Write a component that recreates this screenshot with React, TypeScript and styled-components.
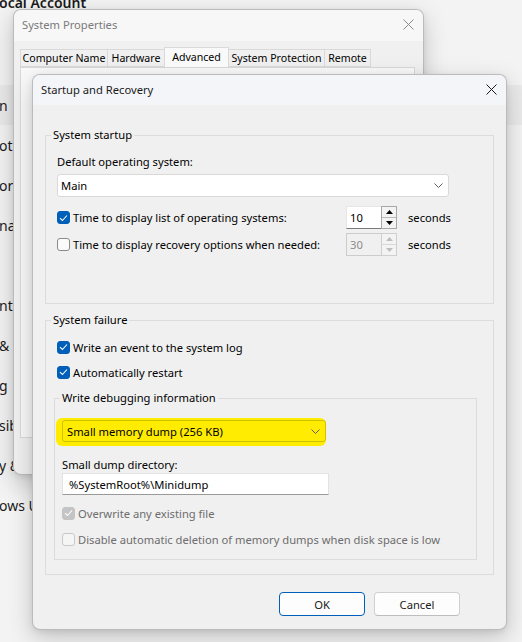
import React from 'react';
import styled, { createGlobalStyle } from 'styled-components';

const GlobalStyle = createGlobalStyle`
  html, body {
    margin: 0;
    padding: 0;
    background: #f3f3f3;
  }
  body {
    font-family: "Noto Sans", "Liberation Sans", sans-serif;
  }
  * {
    box-sizing: border-box;
  }
`;

const FONT = '11.2px';

const Desktop = styled.div`
  position: relative;
  width: 522px;
  height: 642px;
  overflow: hidden;
  background: #f3f3f3;
  color: #1a1a1a;
`;

// settings app behind the dialogs, only its left edge shows
const Nav = styled.div`
  display: flex;
  flex-direction: column;
  margin-left: -1px;
`;

const NavHeader = styled.div`
  font-size: 14px;
  font-weight: 600;
  line-height: 20px;
  margin-top: -7px;
  margin-bottom: 72px;
  white-space: nowrap;
`;

const NavItem = styled.div<{ $active?: boolean }>`
  height: 40px;
  display: flex;
  align-items: center;
  font-size: 14px;
  white-space: nowrap;
  background: ${p => (p.$active ? '#eaeaea' : 'transparent')};
`;

const Window = styled.div<{ $left: number; $top: number; $width: number; $height: number }>`
  position: absolute;
  left: ${p => p.$left}px;
  top: ${p => p.$top}px;
  width: ${p => p.$width}px;
  height: ${p => p.$height}px;
  display: flex;
  flex-direction: column;
  background: #f0f0f0;
  border: 1px solid rgba(0, 0, 0, 0.22);
  border-radius: 8px;
  overflow: hidden;
  box-shadow: 0 8px 24px rgba(0, 0, 0, 0.2), 0 2px 6px rgba(0, 0, 0, 0.08);
  font-size: ${FONT};
`;

const TitleBar = styled.div<{ $height: number; $active?: boolean }>`
  height: ${p => p.$height}px;
  flex: none;
  display: flex;
  align-items: center;
  justify-content: space-between;
  padding: 0 9px 2px 8px;
  background: ${p => (p.$active ? '#f4f5f9' : '#f7f7f7')};
  color: ${p => (p.$active ? '#1a1a1a' : '#7a7a7a')};
  font-size: ${FONT};
`;

const CloseIcon = ({ color }: { color: string }) => (
  <svg width="11" height="11" viewBox="0 0 11 11">
    <path d="M0.5 0.5 L10.5 10.5 M10.5 0.5 L0.5 10.5" stroke={color} strokeWidth="1" />
  </svg>
);

/* System Properties */

const PropsBody = styled.div`
  padding: 6px 8px 0 6px;
  display: flex;
  flex-direction: column;
`;

const TabStrip = styled.div`
  display: flex;
  align-items: flex-end;
  height: 20px;
  padding-left: 1px;
`;

const Tab = styled.div<{ $selected?: boolean; $width: number }>`
  width: ${p => p.$width}px;
  height: ${p => (p.$selected ? 20 : 18)}px;
  padding-bottom: ${p => (p.$selected ? 2 : 0)}px;
  display: flex;
  align-items: center;
  justify-content: center;
  white-space: nowrap;
  font-size: 10.6px;
  color: #000;
  border: 1px solid #d9d9d9;
  border-bottom: ${p => (p.$selected ? 'none' : '1px solid #d9d9d9')};
  margin-left: -1px;
  background: ${p => (p.$selected ? '#f9f9f9' : '#f0f0f0')};
  position: relative;
  z-index: ${p => (p.$selected ? 1 : 0)};
`;

const TabPanel = styled.div`
  height: 371px;
  border: 1px solid #d9d9d9;
  background: #f9f9f9;
`;

/* Startup and Recovery */

const DialogBody = styled.div`
  flex: 1;
  display: flex;
  flex-direction: column;
  padding: 22px 12px 0 12px;
`;

const Group = styled.fieldset<{ $gapTop?: number; $inset?: boolean }>`
  margin: ${p => p.$gapTop ?? 0}px ${p => (p.$inset ? 5 : 0)}px 0 ${p => (p.$inset ? -3 : 0)}px;
  padding: ${p => (p.$inset ? '14px 7px 12px 7px' : '11px 11px 0 11px')};
  border: 1px solid #dcdcdc;
  min-width: 0;
`;

const Legend = styled.legend<{ $shift: number }>`
  padding: 0 2px;
  margin-left: ${p => p.$shift}px;
  font-size: ${FONT};
  line-height: 16px;
  color: #000;
`;

const Label = styled.div<{ $gapTop?: number }>`
  font-size: ${FONT};
  line-height: 16px;
  color: #000;
  margin-top: ${p => p.$gapTop ?? 0}px;
`;

const Select = styled.div<{ $width: number; $height: number; $marked?: boolean }>`
  width: ${p => p.$width}px;
  height: ${p => p.$height}px;
  display: flex;
  align-items: center;
  justify-content: space-between;
  padding: 0 5px 0 ${p => (p.$marked ? 4 : 3)}px;
  background: ${p => (p.$marked ? '#ffec00' : '#ffffff')};
  border: 1px solid ${p => (p.$marked ? '#cfc200' : '#d9d9d9')};
  border-radius: 3px;
  font-size: ${FONT};
  color: #000;
  box-shadow: ${p => (p.$marked ? '-3px 1px 0 3px #ffec00' : 'none')};
`;

const Chevron = () => (
  <svg width="9" height="5" viewBox="0 0 9 5">
    <path d="M0.5 0.5 L4.5 4.5 L8.5 0.5" fill="none" stroke="#606060" strokeWidth="1" />
  </svg>
);

const TextBox = styled.div<{ $width: number }>`
  width: ${p => p.$width}px;
  height: 22px;
  display: flex;
  align-items: center;
  padding-left: 6px;
  background: #fff;
  border: 1px solid #e3e3e3;
  border-bottom-color: #9a9a9a;
  font-size: ${FONT};
  color: #000;
`;

const OptionRow = styled.div<{ $gapTop?: number }>`
  display: flex;
  align-items: center;
  height: 23px;
  margin-top: ${p => p.$gapTop ?? 0}px;
`;

const CheckLine = styled.div<{ $gapTop?: number; $disabled?: boolean }>`
  display: flex;
  align-items: center;
  gap: 3px;
  height: 16px;
  margin-top: ${p => p.$gapTop ?? 0}px;
  font-size: ${FONT};
  white-space: nowrap;
  color: ${p => (p.$disabled ? '#6d6d6d' : '#000')};
`;

const RowLabel = styled(CheckLine)`
  width: 289px;
  flex: none;
`;

const Box = styled.span<{ $checked?: boolean; $disabled?: boolean }>`
  width: 13px;
  height: 13px;
  flex: none;
  display: inline-flex;
  align-items: center;
  justify-content: center;
  border-radius: 3px;
  background: ${p => (p.$checked ? (p.$disabled ? '#c4c4c4' : '#005fb8') : p.$disabled ? '#f5f5f5' : '#fbfbfb')};
  border: 1px solid
    ${p => (p.$checked ? (p.$disabled ? '#c4c4c4' : '#005fb8') : p.$disabled ? '#c8c8c8' : '#8a8a8a')};
`;

const CheckBox = ({ checked, disabled }: { checked?: boolean; disabled?: boolean }) => (
  <Box $checked={checked} $disabled={disabled}>
    {checked && (
      <svg width="9" height="8" viewBox="0 0 9 8">
        <path d="M1 4.2 L3.4 6.5 L8 1.5" fill="none" stroke="#fff" strokeWidth="1.1" />
      </svg>
    )}
  </Box>
);

const SpinInput = styled.div<{ $disabled?: boolean }>`
  width: 35px;
  height: 23px;
  display: flex;
  align-items: center;
  padding-left: 3px;
  font-size: ${FONT};
  background: ${p => (p.$disabled ? '#f0f0f0' : '#fff')};
  color: ${p => (p.$disabled ? '#8c8c8c' : '#000')};
  border: 1px solid ${p => (p.$disabled ? '#cccccc' : '#e6e6e6')};
  border-right: none;
  border-bottom-color: ${p => (p.$disabled ? '#cccccc' : '#7a7a7a')};
`;

const SpinButtons = styled.div<{ $disabled?: boolean }>`
  width: 16px;
  height: 23px;
  display: flex;
  flex-direction: column;
  border: 1px solid ${p => (p.$disabled ? '#cfcfcf' : '#a8a8a8')};
`;

const SpinHalf = styled.div<{ $disabled?: boolean; $down?: boolean }>`
  flex: 1;
  display: flex;
  align-items: center;
  justify-content: center;
  background: #f3f3f3;
  border-top: ${p => (p.$down ? `1px solid ${p.$disabled ? '#d8d8d8' : '#b8b8b8'}` : 'none')};
  color: ${p => (p.$disabled ? '#bdbdbd' : '#000')};
`;

const Arrow = ({ down }: { down?: boolean }) => (
  <svg width="7" height="4" viewBox="0 0 7 4">
    <path d={down ? 'M0 0 L7 0 L3.5 4 Z' : 'M0 4 L7 4 L3.5 0 Z'} fill="currentColor" />
  </svg>
);

const Spin = ({ value, disabled }: { value: string; disabled?: boolean }) => (
  <>
    <SpinInput $disabled={disabled}>{value}</SpinInput>
    <SpinButtons $disabled={disabled}>
      <SpinHalf $disabled={disabled}>
        <Arrow />
      </SpinHalf>
      <SpinHalf $disabled={disabled} $down>
        <Arrow down />
      </SpinHalf>
    </SpinButtons>
  </>
);

const Unit = styled.span`
  margin-left: 11px;
  font-size: ${FONT};
  color: #000;
`;

const Spacer = styled.div<{ $height: number }>`
  height: ${p => p.$height}px;
`;

const Footer = styled.div`
  display: flex;
  justify-content: flex-end;
  gap: 9px;
  margin-top: 17px;
  padding-right: 34px;
`;

const Button = styled.button<{ $default?: boolean }>`
  width: 86px;
  height: 24px;
  font-family: inherit;
  font-size: ${FONT};
  color: #1a1a1a;
  background: #fdfdfd;
  border: 1px solid ${p => (p.$default ? '#005fb8' : '#d0d0d0')};
  border-bottom-color: ${p => (p.$default ? '#005fb8' : '#bdbdbd')};
  border-radius: 4px;
  padding: 0;
`;

const navItems = ['n', 'oth', 'ork', 'naliz', '', 'nts', '& la', 'g', 'sibil', 'y & s', 'ows Up'];

const tabs = [
  { label: 'Computer Name', width: 88 },
  { label: 'Hardware', width: 58 },
  { label: 'Advanced', width: 65 },
  { label: 'System Protection', width: 97 },
  { label: 'Remote', width: 47 },
];

export default function App() {
  return (
    <>
      <GlobalStyle />
      <Desktop>
        <Nav>
          <NavHeader>ocal Account</NavHeader>
          {navItems.map((item, i) => (
            <NavItem key={i} $active={i === 0}>
              {item}
            </NavItem>
          ))}
        </Nav>

        <Window $left={13} $top={9} $width={411} $height={466}>
          <TitleBar $height={31}>
            <span>System Properties</span>
            <CloseIcon color="#8c8c8c" />
          </TitleBar>
          <PropsBody>
            <TabStrip>
              {tabs.map(t => (
                <Tab key={t.label} $width={t.width} $selected={t.label === 'Advanced'}>
                  {t.label}
                </Tab>
              ))}
            </TabStrip>
            <TabPanel />
          </PropsBody>
        </Window>

        <Window $left={32} $top={74} $width={475} $height={556}>
          <TitleBar $height={30} $active>
            <span>Startup and Recovery</span>
            <CloseIcon color="#1a1a1a" />
          </TitleBar>
          <DialogBody>
            <Group>
              <Legend $shift={-6}>System startup</Legend>
              <Label>Default operating system:</Label>
              <Select $width={392} $height={23} style={{ marginTop: 4 }}>
                <span>Main</span>
                <Chevron />
              </Select>
              <OptionRow $gapTop={9}>
                <RowLabel>
                  <CheckBox checked />
                  Time to display list of operating systems:
                </RowLabel>
                <Spin value="10" />
                <Unit>seconds</Unit>
              </OptionRow>
              <OptionRow $gapTop={4}>
                <RowLabel>
                  <CheckBox />
                  Time to display recovery options when needed:
                </RowLabel>
                <Spin value="30" disabled />
                <Unit>seconds</Unit>
              </OptionRow>
              <Spacer $height={47} />
            </Group>

            <Group $gapTop={8}>
              <Legend $shift={-6}>System failure</Legend>
              <CheckLine>
                <CheckBox checked />
                Write an event to the system log
              </CheckLine>
              <CheckLine $gapTop={9}>
                <CheckBox checked />
                Automatically restart
              </CheckLine>
              <Group $gapTop={10} $inset>
                <Legend $shift={-2}>Write debugging information</Legend>
                <Select $width={264} $height={22} $marked>
                  <span>Small memory dump (256 KB)</span>
                  <Chevron />
                </Select>
                <Label $gapTop={15}>Small dump directory:</Label>
                <TextBox $width={267}>%SystemRoot%\Minidump</TextBox>
                <CheckLine $gapTop={10} $disabled>
                  <CheckBox checked disabled />
                  Overwrite any existing file
                </CheckLine>
                <CheckLine $gapTop={10} $disabled>
                  <CheckBox disabled />
                  Disable automatic deletion of memory dumps when disk space is low
                </CheckLine>
              </Group>
              <Spacer $height={14} />
            </Group>

            <Footer>
              <Button $default>OK</Button>
              <Button>Cancel</Button>
            </Footer>
          </DialogBody>
        </Window>
      </Desktop>
    </>
  );
}
